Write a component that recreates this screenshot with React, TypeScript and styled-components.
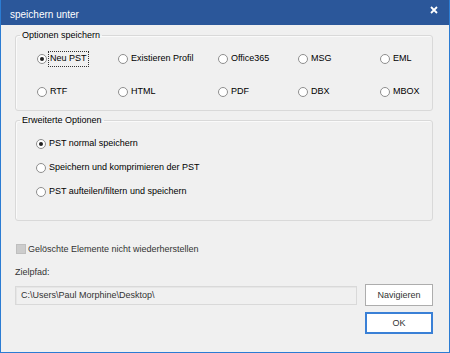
import React from "react";
import styled, { createGlobalStyle } from "styled-components";

const Global = createGlobalStyle`
  html, body { margin: 0; padding: 0; background: #f0f0f0; }
  body { font-family: "Liberation Sans", Arial, sans-serif; }
  * { box-sizing: border-box; }
`;

const Window = styled.div`
  width: 450px;
  height: 353px;
  display: flex;
  flex-direction: column;
  background: #f0f0f0;
  border: 1px solid #2b7cd3;
  border-top: none;
  overflow: hidden;
`;

const TitleBar = styled.div`
  height: 25px;
  margin: 0 -1px;
  background: #2b579a;
  display: flex;
  align-items: center;
  justify-content: space-between;
  padding: 4px 12px 0 10px;
  color: #fff;
  font-size: 10px;
  flex-shrink: 0;
`;

const CloseIcon = styled.svg`
  width: 8px;
  height: 8px;
  margin-top: -9px;
`;

const Content = styled.div`
  display: flex;
  flex-direction: column;
  padding: 4px 16px 0 14px;
  font-size: 9px;
  color: #000;
`;

const Group = styled.fieldset<{ $mt?: number; $pb: number }>`
  margin: ${(p) => p.$mt ?? 0}px 0 0 0;
  padding: 10px 0 ${(p) => p.$pb}px 0;
  border: 1px solid #d9d9d9;
  border-radius: 3px;
  box-shadow: inset 1px 1px 0 #fafafa;
  min-width: 0;
`;

const Legend = styled.legend`
  margin-left: 4px;
  padding: 0 2px;
  font-size: 9px;
  line-height: 12px;
  color: #000;
`;

const FormatGrid = styled.div`
  display: grid;
  grid-template-columns: 81px 100px 80px 82px 1fr;
  grid-auto-rows: 16px;
  row-gap: 17px;
  padding-left: 21px;
`;

const OptionList = styled.div`
  display: flex;
  flex-direction: column;
  gap: 8px;
  padding-left: 20px;
`;

const RadioRow = styled.label`
  display: flex;
  align-items: center;
  height: 16px;
  gap: 2px;
  white-space: nowrap;
`;

const RadioDot = styled.span<{ $checked?: boolean }>`
  width: 10px;
  height: 10px;
  flex-shrink: 0;
  border-radius: 50%;
  border: 1px solid #8e8e8e;
  background: #fff;
  display: flex;
  align-items: center;
  justify-content: center;
  &::after {
    content: "";
    width: 4px;
    height: 4px;
    border-radius: 50%;
    background: ${(p) => (p.$checked ? "#222" : "transparent")};
  }
`;

const RadioText = styled.span<{ $focused?: boolean }>`
  padding: 1px 1px 2px;
  font-size: 9px;
  line-height: 11px;
  outline: ${(p) => (p.$focused ? "1px dotted #333" : "none")};
`;

const CheckRow = styled.label`
  display: flex;
  align-items: center;
  gap: 2px;
  height: 16px;
  margin-top: 20px;
  color: #333;
  font-size: 9px;
`;

const CheckBox = styled.span`
  width: 10px;
  height: 10px;
  margin-left: 1px;
  background: #cccccc;
  border: 1px solid #bfbfbf;
`;

const FieldLabel = styled.div`
  margin-top: 8px;
  height: 14px;
  line-height: 14px;
  font-size: 9px;
  color: #333;
`;

const PathGrid = styled.div`
  display: grid;
  grid-template-columns: 1fr 68px;
  column-gap: 8px;
  row-gap: 6px;
  align-items: center;
  margin-top: 5px;
`;

const PathInput = styled.div`
  height: 19px;
  border: 1px solid #d9d9d9;
  background: #f0f0f0;
  box-shadow: inset 1px 1px 0 #e6e6e6;
  display: flex;
  align-items: center;
  padding-left: 5px;
  font-size: 9px;
  color: #333;
`;

const Button = styled.button<{ $default?: boolean }>`
  grid-column: 2;
  height: 22px;
  width: 68px;
  margin: 0;
  padding: 0;
  background: #fff;
  border: 1px solid ${(p) => (p.$default ? "#3a80d6" : "#adadad")};
  box-shadow: ${(p) => (p.$default ? "inset 0 0 0 1px #3a80d6" : "none")};
  font-family: "Liberation Sans", Arial, sans-serif;
  font-size: 9px;
  color: #333;
`;

const formats = [
  "Neu PST",
  "Existieren Profil",
  "Office365",
  "MSG",
  "EML",
  "RTF",
  "HTML",
  "PDF",
  "DBX",
  "MBOX",
];

const options = [
  "PST normal speichern",
  "Speichern und komprimieren der PST",
  "PST aufteilen/filtern und speichern",
];

export default function App() {
  return (
    <>
      <Global />
      <Window>
        <TitleBar>
          <span>speichern unter</span>
          <CloseIcon viewBox="0 0 8 8">
            <path d="M1 1 L7 7 M7 1 L1 7" stroke="#fff" strokeWidth="1.8" />
          </CloseIcon>
        </TitleBar>
        <Content>
          <Group $pb={10}>
            <Legend>Optionen speichern</Legend>
            <FormatGrid>
              {formats.map((f, i) => (
                <RadioRow key={f}>
                  <RadioDot $checked={i === 0} />
                  <RadioText $focused={i === 0}>{f}</RadioText>
                </RadioRow>
              ))}
            </FormatGrid>
          </Group>
          <Group $mt={3} $pb={20}>
            <Legend>Erweiterte Optionen</Legend>
            <OptionList>
              {options.map((o, i) => (
                <RadioRow key={o}>
                  <RadioDot $checked={i === 0} />
                  <RadioText>{o}</RadioText>
                </RadioRow>
              ))}
            </OptionList>
          </Group>
          <CheckRow>
            <CheckBox />
            Gelöschte Elemente nicht wiederherstellen
          </CheckRow>
          <FieldLabel>Zielpfad:</FieldLabel>
          <PathGrid>
            <PathInput>C:\Users\Paul Morphine\Desktop\</PathInput>
            <Button>Navigieren</Button>
            <Button $default>OK</Button>
          </PathGrid>
        </Content>
      </Window>
    </>
  );
}
